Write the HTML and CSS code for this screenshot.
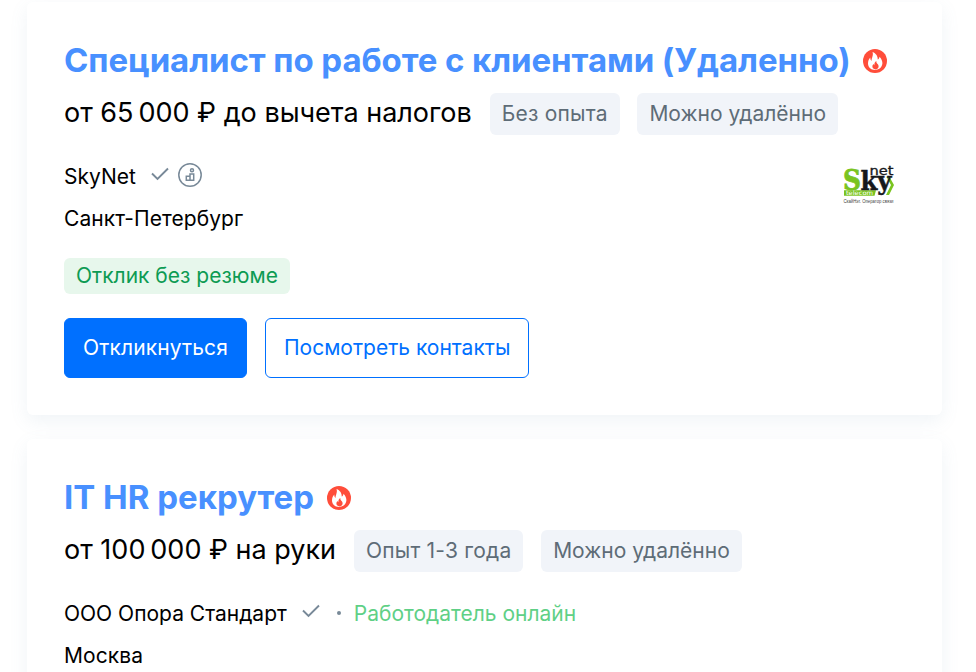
FILE: index.html
```html
<!DOCTYPE html>
<html lang="ru">
<head>
    <meta charset="UTF-8">
    <meta name="viewport" content="width=device-width, initial-scale=1.0">
    <title>Вакансии</title>
    <link rel="stylesheet" href="styles.css">
</head>
<body>

    <!-- общие иконки -->
    <svg class="sprite" width="0" height="0">
        <symbol id="fire" viewBox="0 0 24 24">
            <circle cx="12" cy="12" r="12" fill="#ff4d3a"/>
            <path fill="#fff" d="M9.500 3c3.600 1.400 5.500 4.400 5.200 7.600 1-.5 1.700-1.500 1.800-2.900 1.900 2.100 3 4.400 2.900 6.600-.2 3.700-3 6.500-7.200 6.700C7.900 21 5 18.100 5 14.500c0-2.600.9-4.500 2.300-6 0 1.600.3 2.700 1.200 3.400C8.500 8.800 10.700 6.500 9.500 3z"/>
            <path fill="#ff4d3a" d="M13.400 12c-.2 1.300.3 2.100 1.100 2.900.8.800 1.200 1.600 1.100 2.600-.1 1.700-1.400 2.900-3.100 2.900s-3.100-1.100-3.100-2.800c0-1.200.5-1.900 1.300-2.500.1.600.3.900.7 1.100-.2-1.700.4-3.300 2-4.200z"/>
        </symbol>
        <symbol id="check" viewBox="0 0 18 14">
            <path fill="none" stroke="#788998" stroke-width="1.900" d="M1 6.500l5.500 5.500L17 1.500"/>
        </symbol>
        <symbol id="award" viewBox="0 0 24 24">
            <g fill="none" stroke="#788998" stroke-width="1.500">
                <circle cx="12" cy="12" r="11.200"/>
                <circle cx="14" cy="7.300" r="1.500"/>
                <path d="M8.300 17.300v-4h3.700v4zM12 17.300v-6.200h3.700v6.200z"/>
            </g>
        </symbol>
    </svg>

    <div class="vacancy-list">
        <div class="vacancy">
            <h2 class="title title-long"><a href="#">Специалист по работе с клиентами (Удаленно)</a><svg class="fire"><use href="#fire"/></svg></h2>
            <div class="conditions">
                <span class="salary">от 65&#8239;000 ₽ до вычета налогов</span>
                <span class="chip experience">Без опыта</span>
                <span class="chip">Можно удалённо</span>
            </div>
            <div class="info">
                <div class="employer">
                    <div class="company">
                        <span>SkyNet</span>
                        <svg class="check"><use href="#check"/></svg>
                        <svg class="award"><use href="#award"/></svg>
                    </div>
                    <div class="city">Санкт-Петербург</div>
                </div>
                <svg class="logo" width="54" height="42" viewBox="0 0 54 42">
                    <text class="logo-s" x="0" y="24.500" textLength="18" lengthAdjust="spacingAndGlyphs">S</text>
                    <path fill="#7ac41f" d="M1 25.200h32l-1.500 5.500H1zM43.500 12h3l4.500 8-5 10h-3l5-10z"/>
                    <text class="logo-ky" x="17.500" y="24.500" textLength="31" lengthAdjust="spacingAndGlyphs">ky</text>
                    <text class="logo-net" x="26.500" y="9.500" textLength="24" lengthAdjust="spacingAndGlyphs">net</text>
                    <text class="logo-telecom" x="3" y="30" textLength="27" lengthAdjust="spacingAndGlyphs">telecom</text>
                    <text class="logo-note" x="0.500" y="38" textLength="50" lengthAdjust="spacingAndGlyphs">СкайНэт. Оператор связи</text>
                </svg>
            </div>
            <div class="label">Отклик без резюме</div>
            <div class="actions">
                <button class="btn btn-primary">Откликнуться</button>
                <button class="btn">Посмотреть контакты</button>
            </div>
        </div>

        <div class="vacancy">
            <h2 class="title"><a href="#">IT HR рекрутер</a><svg class="fire"><use href="#fire"/></svg></h2>
            <div class="conditions">
                <span class="salary">от 100&#8239;000 ₽ на руки</span>
                <span class="chip experience">Опыт 1-3 года</span>
                <span class="chip">Можно удалённо</span>
            </div>
            <div class="info">
                <div class="employer">
                    <div class="company">
                        <span>ООО Опора Стандарт</span>
                        <svg class="check"><use href="#check"/></svg>
                        <span class="dot"></span>
                        <span class="online">Работодатель онлайн</span>
                    </div>
                    <div class="city">Москва</div>
                </div>
            </div>
        </div>
    </div>

</body>
</html>
```
FILE: styles.css
```css
body {
    margin: 0;
    height: 672px;
    overflow: hidden;
    background: #fff;
    color: #000;
    font-family: Inter, "Noto Sans", sans-serif;
    font-size: 21px;
}
.sprite {
    position: absolute;
}
.vacancy-list {
    display: flex;
    flex-direction: column;
    gap: 24px;
    padding: 2px 34px 0 27px;
}
.vacancy {
    height: 413px;
    flex: none;
    box-sizing: border-box;
    padding: 36px 37px 37px;
    border-radius: 6px;
    background: #fff;
    box-shadow: 0 6px 18px rgba(112, 146, 177, 0.1);
}
.title {
    display: flex;
    align-items: center;
    height: 44px;
    margin: 0 0 11px;
    font-size: 33px;
    font-weight: 700;
    white-space: nowrap;
}
.title-long {
    letter-spacing: -0.08px;
}
.title a {
    color: #4890ff;
    text-decoration: none;
}
.fire {
    width: 24px;
    height: 24px;
    margin: 2px 0 0 13px;
}
.title-long .fire {
    margin-left: 12px;
}
.conditions {
    display: flex;
    align-items: center;
    gap: 18px;
    height: 42px;
    white-space: nowrap;
}
.salary {
    font-size: 27px;
    line-height: 38px;
    padding-bottom: 2px;
}
.chip {
    padding: 0 12px;
    border-radius: 6px;
    background: #f1f4f9;
    color: #5e6c77;
    line-height: 42px;
}
.experience {
    letter-spacing: 0.2px;
}
.chip + .chip {
    margin-left: -0.3px;
}
.info {
    display: flex;
    justify-content: space-between;
    margin-top: 20px;
}
.company {
    display: flex;
    align-items: center;
    height: 42px;
}
.check {
    width: 18px;
    height: 14px;
    margin: -4px 0 0 15px;
}
.award {
    width: 24px;
    height: 24px;
    margin: -3px 0 0 9px;
}
.dot {
    width: 4px;
    height: 4px;
    margin: 0 13px 0 17px;
    border-radius: 50%;
    background: #788998;
}
.online {
    color: #5fd086;
}
.city {
    height: 42px;
    line-height: 44px;
    letter-spacing: 0.07px;
}
.logo {
    margin: 10px 8px 0 0;
    overflow: visible;
}
.logo-s {
    fill: #7ac41f;
    font: bold 28px "DejaVu Serif", serif;
    stroke: #7ac41f;
    stroke-width: 0.8px;
}
.logo-ky {
    fill: #16181c;
    font: bold 26px "DejaVu Serif", serif;
    stroke: #16181c;
    stroke-width: 0.5px;
}
.logo-net {
    fill: #16181c;
    font: 12px "DejaVu Sans", sans-serif;
    stroke: #16181c;
    stroke-width: 0.3px;
}
.logo-telecom {
    fill: #fff;
    font: 6px "DejaVu Sans", sans-serif;
}
.logo-note {
    fill: #444;
    font: 5.5px "Liberation Sans", sans-serif;
}
.label {
    width: fit-content;
    margin: 19px 0 24px;
    padding: 0 12px;
    border-radius: 6px;
    background: #e7f7ec;
    color: #0d9b53;
    line-height: 36px;
}
.actions {
    display: flex;
    gap: 18px;
}
.btn {
    height: 60px;
    padding: 0 18px 2px;
    border: 1px solid #0070ff;
    border-radius: 6px;
    background: #fff;
    color: #0070ff;
    font: inherit;
    cursor: pointer;
}
.btn-primary {
    background: #0070ff;
    color: #fff;
    letter-spacing: 0.13px;
}
```
